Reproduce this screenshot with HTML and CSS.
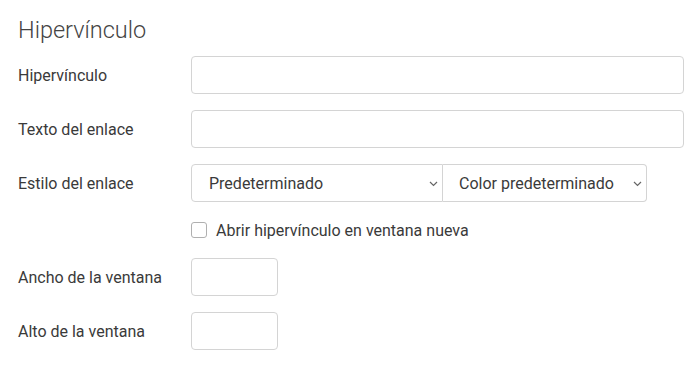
FILE: index.html
```html
<!DOCTYPE html>
<html lang="es">
<head>
<meta charset="utf-8">
<title>Hipervínculo</title>
<link rel="stylesheet" href="styles.css">
</head>
<body>
<form class="panel">
  <h2 class="title">Hipervínculo</h2>
  <div class="row">
    <label class="label" for="url">Hipervínculo</label>
    <input class="field wide" id="url" type="text">
  </div>
  <div class="row">
    <label class="label" for="txt">Texto del enlace</label>
    <input class="field wide" id="txt" type="text">
  </div>
  <div class="row">
    <label class="label">Estilo del enlace</label>
    <div class="selects">
      <div class="select-wrap first">
        <select class="select"><option>Predeterminado</option></select>
        <svg class="chev" width="9" height="6" viewBox="0 0 9 6"><path d="M1 1l3.5 3.5L8 1" fill="none" stroke="#666" stroke-width="1.2"/></svg>
      </div>
      <div class="select-wrap second">
        <select class="select"><option>Color predeterminado</option></select>
        <svg class="chev" width="9" height="6" viewBox="0 0 9 6"><path d="M1 1l3.5 3.5L8 1" fill="none" stroke="#666" stroke-width="1.2"/></svg>
      </div>
    </div>
  </div>
  <div class="row check-row">
    <span class="label"></span>
    <label class="check"><span class="box"></span>Abrir hipervínculo en ventana nueva</label>
  </div>
  <div class="row">
    <label class="label" for="w">Ancho de la ventana</label>
    <input class="field small" id="w" type="text">
  </div>
  <div class="row">
    <label class="label" for="h">Alto de la ventana</label>
    <input class="field small" id="h" type="text">
  </div>
</form>
</body>
</html>
```
FILE: styles.css
```css
html, body {
  margin: 0;
  padding: 0;
  background: #fff;
}
body {
  font-family: Roboto, "Liberation Sans", sans-serif;
  color: #3a3a3a;
}
.panel {
  padding: 16px 17px 0 18px;
  display: flex;
  flex-direction: column;
  gap: 16px;
}
.title {
  margin: 0 0 -5px 0;
  font-size: 23.5px;
  line-height: 29px;
  font-weight: 300;
  color: #444;
}
.row {
  display: grid;
  grid-template-columns: 173px 1fr;
  align-items: center;
  height: 38px;
}
.label {
  font-size: 16px;
  color: #3a3a3a;
}
.field {
  box-sizing: border-box;
  height: 38px;
  border: 1px solid #d4d4d4;
  border-radius: 4px;
  background: #fff;
  font: inherit;
  padding: 0 12px;
  outline: none;
}
.wide { width: 493px; }
.small { width: 87px; }
.selects {
  display: flex;
}
.select-wrap {
  position: relative;
  height: 38px;
}
.select-wrap.first { width: 252px; }
.select-wrap.second { width: 204px; }
.select {
  appearance: none;
  -webkit-appearance: none;
  box-sizing: border-box;
  width: 100%;
  height: 38px;
  border: 1px solid #d4d4d4;
  background: #fff;
  font-family: Roboto, "Liberation Sans", sans-serif;
  font-size: 16px;
  color: #3a3a3a;
  padding: 0 0 0 17px;
  outline: none;
}
.first .select { border-radius: 4px 0 0 4px; }
.second .select { border-radius: 0 4px 4px 0; border-left: none; padding-left: 16px; }
.chev {
  position: absolute;
  right: 5px;
  top: 17px;
  pointer-events: none;
}
.check-row { height: 24px; }
.check {
  display: flex;
  align-items: center;
  font-size: 16px;
  color: #3a3a3a;
}
.box {
  box-sizing: border-box;
  width: 16px;
  height: 16px;
  border: 1px solid #b0b0b0;
  border-radius: 3px;
  margin-right: 9px;
}
```
